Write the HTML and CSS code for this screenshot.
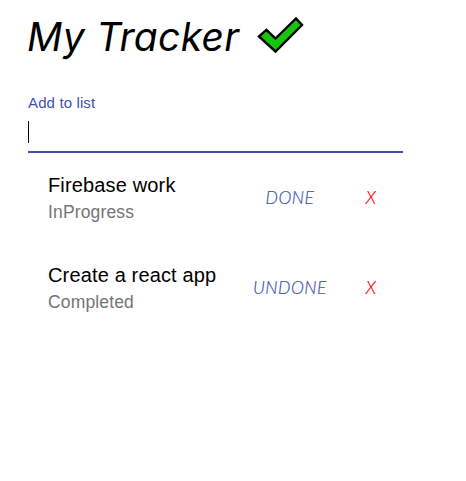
FILE: index.html
```html
<!DOCTYPE html>
<html lang="en">
<head>
<meta charset="utf-8">
<title>My Tracker</title>
<link rel="stylesheet" href="styles.css">
</head>
<body>
<main class="app">
  <h1 class="title"><span class="wordmark">My Tracker</span>
    <svg class="check" width="48" height="40" viewBox="0 0 48 40"><path d="M3 20.5 L10.5 13.8 L19.5 22.5 L40 2.5 L46 9 L19.5 35.5 Z" fill="#16c60c" stroke="#000" stroke-width="2.4"/></svg>
  </h1>
  <div class="field">
    <label class="label">Add to list</label>
    <div class="input"><span class="caret"></span></div>
  </div>
  <ul class="list">
    <li class="item">
      <div class="text"><p class="name">Firebase work</p><p class="status">InProgress</p></div>
      <button class="btn toggle">DONE</button>
      <button class="btn remove">X</button>
    </li>
    <li class="item">
      <div class="text"><p class="name">Create a react app</p><p class="status">Completed</p></div>
      <button class="btn toggle">UNDONE</button>
      <button class="btn remove">X</button>
    </li>
  </ul>
</main>
</body>
</html>
```

FILE: styles.css
```css
* { box-sizing: border-box; }
body { margin: 0; background: #fff; font-family: "Liberation Sans", Arial, sans-serif; }
.app { width: 375px; margin-left: 28px; }
.title {
  display: flex; align-items: flex-start; height: 94px; margin: 0; padding-top: 16px;
  font: italic 450 39px/42px Inter, sans-serif; font-feature-settings: "cv11"; white-space: nowrap;
}
.wordmark { width: 228px; margin-left: -1px; letter-spacing: 0.3px; }
.check { flex: none; margin-left: 1px; }
.label { display: block; height: 24px; font-size: 15px; line-height: 18px; letter-spacing: 0.13px; color: #3f51b5; }
.input { height: 35px; padding-top: 3px; border-bottom: 2px solid #3f51b5; }
.caret { display: block; width: 1px; height: 22px; background: #000; }
.list { margin: 0; padding: 0; list-style: none; }
.item { display: flex; align-items: center; height: 90px; padding-left: 20px; }
.text { flex: 1; padding-bottom: 2px; }
.name, .status { margin: 0; white-space: nowrap; }
.name { font-size: 20px; line-height: 30px; letter-spacing: 0.15px; color: #000; }
.status { font-size: 17.5px; line-height: 25px; letter-spacing: 0.15px; color: #757575; }
.btn { padding: 0; border: 0; background: none; font: italic 300 17.5px/30px Lato, sans-serif; letter-spacing: 0.5px; text-align: center; -webkit-text-stroke: 0.2px; }
.toggle { width: 90px; margin-right: -4px; color: #3f51b5; }
.remove { width: 80px; margin-right: -8px; color: #f00; }
```
